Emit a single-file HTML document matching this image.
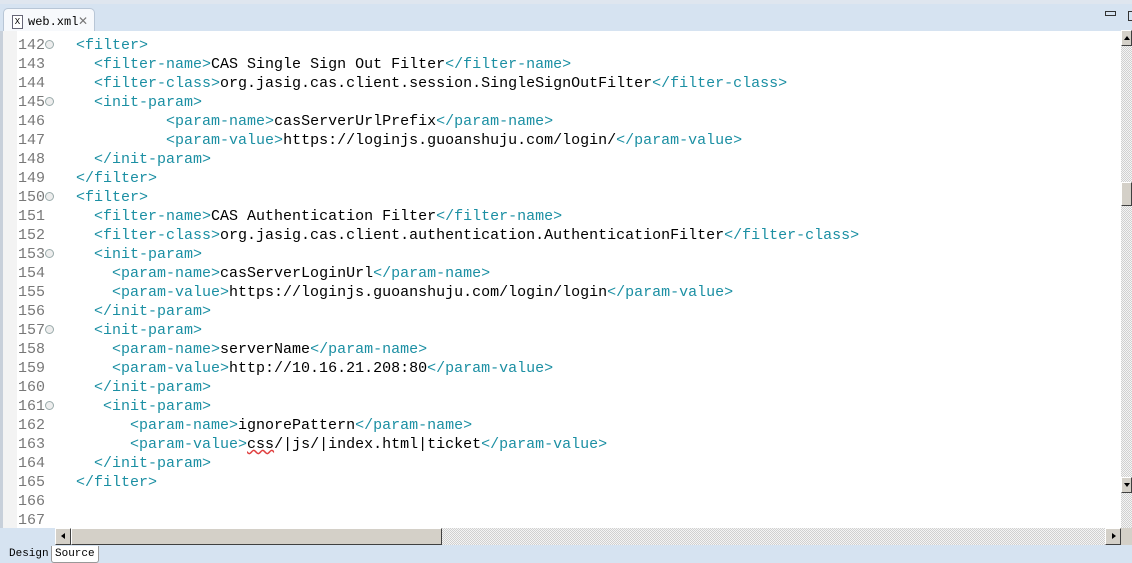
<!DOCTYPE html>
<html><head><style>
body{margin:0;width:1132px;height:563px;overflow:hidden;background:#d6e3f1;font-family:"Liberation Mono",monospace;position:relative}
.top{position:absolute;left:0;top:0;width:1132px;height:30px;background:#d6e3f1;border-top:4px solid #dfe6ef;box-sizing:border-box}
.tab{position:absolute;left:3px;top:4px;width:90px;height:27px;background:#f7f9fc;border:1px solid #b8c6d6;border-bottom:none;border-radius:5px 5px 0 0;font-size:12px;line-height:26px}
.ed{position:absolute;left:0;top:31px;width:1121px;height:497px;background:#fff;border-left:3px solid #c8d0da;box-sizing:border-box}
.strip{position:absolute;left:0;top:0;width:14px;height:497px;background:#f3f3f3}
.ln{position:absolute;left:18px;width:40px;font-size:15px;color:#787878;line-height:19px}
.code{position:absolute;left:58px;font-size:15px;line-height:19px;white-space:pre;color:#000}
.t{color:#1b8fa3}
.fold{position:absolute;left:45px;width:7px;height:7px;border:1px solid #9aa;border-radius:50%;background:#eee}
.vs{position:absolute;left:1121px;top:30px;width:11px;height:498px;background:repeating-conic-gradient(#d0d0d0 0 25%,#f4f4f4 0 50%) 0 0/2px 2px}
.hs{position:absolute;left:55px;top:528px;width:1066px;height:17px;background:repeating-conic-gradient(#d0d0d0 0 25%,#f4f4f4 0 50%) 0 0/2px 2px}
.btn{position:absolute;background:#d4d0c8;border:1px solid;border-color:#fff #404040 #404040 #fff;box-sizing:border-box}
.bt{position:absolute;top:546px;font-size:11px;height:17px;line-height:16px;padding:0 3px;box-sizing:border-box}
</style></head><body>
<div class="top">
 <div class="tab"><span style="position:absolute;left:8px;top:6px;width:9px;height:12px;border:1px solid #667;background:#fff;font-size:9px;line-height:12px;text-align:center">X</span><span style="position:absolute;left:24px">web.xml</span><span style="position:absolute;left:74px;color:#777">✕</span></div>
 <div style="position:absolute;left:1105px;top:7px;width:9px;height:3px;border:1px solid #333"></div>
 <div style="position:absolute;left:1128px;top:7px;width:6px;height:8px;border:1px solid #333"></div>
</div>
<div class="ed"><div class="strip"></div></div>
<div id="lines"></div>
<div class="ln" style="top:36px">142<br>143<br>144<br>145<br>146<br>147<br>148<br>149<br>150<br>151<br>152<br>153<br>154<br>155<br>156<br>157<br>158<br>159<br>160<br>161<br>162<br>163<br>164<br>165<br>166<br>167</div>
<div class="fold" style="top:40px"></div><div class="fold" style="top:97px"></div><div class="fold" style="top:192px"></div><div class="fold" style="top:249px"></div><div class="fold" style="top:325px"></div><div class="fold" style="top:401px"></div>
<div class="code" style="top:36px">  <span class="t">&lt;filter&gt;</span>
    <span class="t">&lt;filter-name&gt;</span>CAS Single Sign Out Filter<span class="t">&lt;/filter-name&gt;</span>
    <span class="t">&lt;filter-class&gt;</span>org.jasig.cas.client.session.SingleSignOutFilter<span class="t">&lt;/filter-class&gt;</span>
    <span class="t">&lt;init-param&gt;</span>
            <span class="t">&lt;param-name&gt;</span>casServerUrlPrefix<span class="t">&lt;/param-name&gt;</span>
            <span class="t">&lt;param-value&gt;</span>https://loginjs.guoanshuju.com/login/<span class="t">&lt;/param-value&gt;</span>
    <span class="t">&lt;/init-param&gt;</span>
  <span class="t">&lt;/filter&gt;</span>
  <span class="t">&lt;filter&gt;</span>
    <span class="t">&lt;filter-name&gt;</span>CAS Authentication Filter<span class="t">&lt;/filter-name&gt;</span>
    <span class="t">&lt;filter-class&gt;</span>org.jasig.cas.client.authentication.AuthenticationFilter<span class="t">&lt;/filter-class&gt;</span>
    <span class="t">&lt;init-param&gt;</span>
      <span class="t">&lt;param-name&gt;</span>casServerLoginUrl<span class="t">&lt;/param-name&gt;</span>
      <span class="t">&lt;param-value&gt;</span>https://loginjs.guoanshuju.com/login/login<span class="t">&lt;/param-value&gt;</span>
    <span class="t">&lt;/init-param&gt;</span>
    <span class="t">&lt;init-param&gt;</span>
      <span class="t">&lt;param-name&gt;</span>serverName<span class="t">&lt;/param-name&gt;</span>
      <span class="t">&lt;param-value&gt;</span>http://10.16.21.208:80<span class="t">&lt;/param-value&gt;</span>
    <span class="t">&lt;/init-param&gt;</span>
     <span class="t">&lt;init-param&gt;</span>
        <span class="t">&lt;param-name&gt;</span>ignorePattern<span class="t">&lt;/param-name&gt;</span>
        <span class="t">&lt;param-value&gt;</span><span style="text-decoration:underline wavy #e04040">css</span>/|js/|index.html|ticket<span class="t">&lt;/param-value&gt;</span>
    <span class="t">&lt;/init-param&gt;</span>
  <span class="t">&lt;/filter&gt;</span></div>
<div class="vs"></div>
<div class="btn" style="left:1121px;top:30px;width:11px;height:16px"><span style="position:absolute;left:2px;top:5px;border:3px solid transparent;border-bottom:4px solid #000;border-top:0"></span></div>
<div class="btn" style="left:1121px;top:182px;width:11px;height:24px"></div>
<div class="btn" style="left:1121px;top:477px;width:11px;height:16px"><span style="position:absolute;left:2px;top:5px;border:3px solid transparent;border-top:4px solid #000;border-bottom:0"></span></div>
<div class="hs"></div>
<div class="btn" style="left:55px;top:528px;width:16px;height:17px"><span style="position:absolute;left:5px;top:4px;border:3px solid transparent;border-right:4px solid #000;border-left:0"></span></div>
<div class="btn" style="left:71px;top:528px;width:371px;height:17px"></div>
<div class="btn" style="left:1105px;top:528px;width:16px;height:17px"><span style="position:absolute;left:6px;top:4px;border:3px solid transparent;border-left:4px solid #000;border-right:0"></span></div>
<div class="btn" style="left:1121px;top:528px;width:11px;height:17px;border:none"></div>
<div class="bt" style="left:6px;background:#d6e3f1">Design</div>
<div class="bt" style="left:51px;background:#fff;border:1px solid #999;border-top:none;border-radius:0 0 3px 3px">Source</div>
</body></html>
